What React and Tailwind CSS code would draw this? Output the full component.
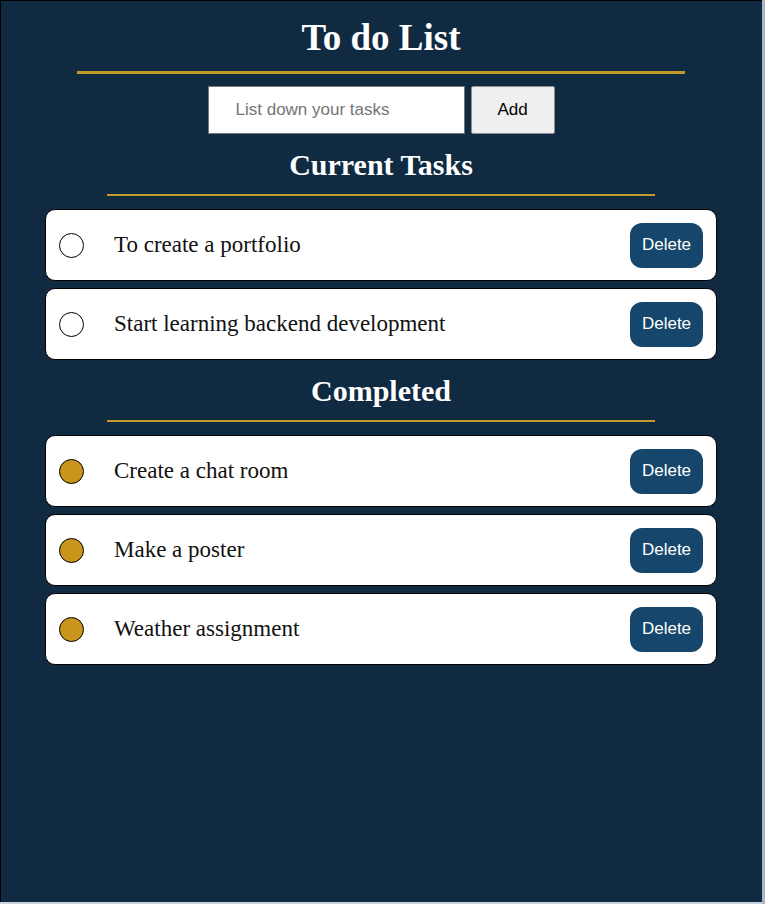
import React from 'react';

const current = ['To create a portfolio', 'Start learning backend development'];
const completed = ['Create a chat room', 'Make a poster', 'Weather assignment'];

function TaskRow({ text, done }) {
  return (
    <div className="w-[672px] h-[72px] bg-white border border-black rounded-[10px] flex items-center pl-[13px] pr-[13px]">
      <span
        className={`w-[25px] h-[25px] rounded-full border border-black shrink-0 ${done ? 'bg-[#c9961b]' : 'bg-white'}`}
      />
      <span className="ml-[30px] flex-1 text-[23px] text-[#111] font-['Liberation_Serif',serif]">{text}</span>
      <button className="w-[73px] h-[45px] rounded-[12px] bg-[#16466b] text-white text-[17px] font-['Liberation_Sans',Arial,sans-serif]">
        Delete
      </button>
    </div>
  );
}

function Section({ title, tasks, done }) {
  return (
    <>
      <h2 className="mt-[14px] text-[30px] leading-[34px] font-bold text-white font-['Liberation_Serif',serif]">{title}</h2>
      <div className="mt-[12px] w-[548px] h-[2px] bg-[#c39b2b]" />
      <div className="mt-[13px] flex flex-col gap-[7px]">
        {tasks.map((t) => (
          <TaskRow key={t} text={t} done={done} />
        ))}
      </div>
    </>
  );
}

export default function App() {
  return (
    <div className="w-[765px] h-[904px] flex flex-col bg-[#c9d1dc]">
      <div className="flex flex-1">
        <main className="w-[762px] h-[902px] bg-[#0f2a41] border-l border-t border-black flex flex-col items-center pt-[17px] pr-[1px]">
          <h1 className="text-[37px] leading-[40px] font-bold text-white font-['Liberation_Serif',serif]">To do List</h1>
          <div className="mt-[13px] w-[608px] h-[3px] bg-[#c39b2b]" />
          <div className="mt-[12px] flex gap-[6px] font-['Liberation_Sans',Arial,sans-serif] text-[17px]">
            <input
              className="w-[257px] h-[48px] bg-white border border-[#767676] pl-[27px] text-black placeholder:text-[#757575] outline-none"
              placeholder="List down your tasks"
            />
            <button className="w-[84px] h-[48px] bg-[#efefef] border border-[#8f8f8f] rounded-[2px] text-black">Add</button>
          </div>
          <Section title="Current Tasks" tasks={current} done={false} />
          <Section title="Completed" tasks={completed} done={true} />
        </main>
        <div className="flex-1 bg-[#a9b6c8]" />
      </div>
    </div>
  );
}
